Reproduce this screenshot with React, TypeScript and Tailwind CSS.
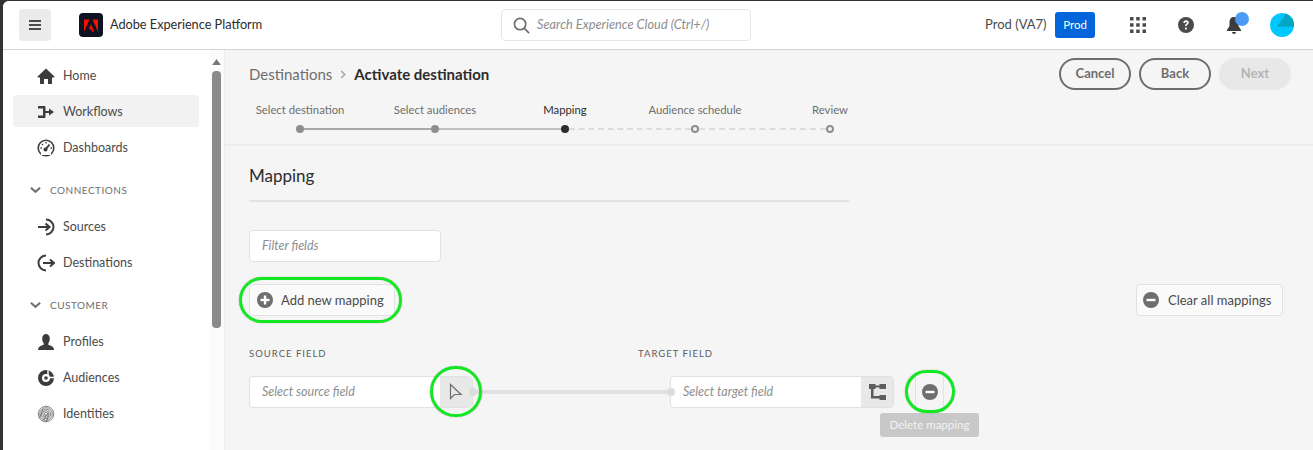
import React from "react";

const font = { fontFamily: '"Lato","Open Sans",sans-serif' };

function NavIcon({ name }: { name: string }) {
  const c = "w-[18px] h-[18px] text-[#3c3c3c]";
  switch (name) {
    case "home":
      return (
        <svg viewBox="0 0 18 18" className={c} fill="currentColor">
          <path d="M9 1.500 0.600 9.600c-.3.400 0 .9.400.9H3V16.500c0 .3.200.5.500.5H7v-5h4v5h3.500c.3 0 .5-.2.500-.5V10.500h2c.5 0 .7-.5.400-.9L9 1.500z" />
        </svg>
      );
    case "workflows":
      return (
        <svg viewBox="0 0 18 18" className={c} fill="currentColor">
          <path d="M1 3h6.500c.5 0 1 .5 1 1v4H12V5.500L17 9l-5 3.500V10H8.500v4c0 .5-.5 1-1 1H1v-2.500h5V5.500H1z" />
        </svg>
      );
    case "dash":
      return (
        <svg viewBox="0 0 18 18" className={c} fill="none" stroke="currentColor" strokeWidth="1.600">
          <circle cx="9" cy="9" r="7.800" />
          <path d="M4 14.500h10" stroke="#fff" strokeWidth="3" />
          <path d="M8.500 10.500 12.500 5.500" strokeWidth="2" />
          <path d="M3.500 9h1.500M5 5l1 1M9 3v1.500M13.500 9H15" strokeWidth="1.300" />
          <circle cx="8.500" cy="10.500" r="1.300" fill="currentColor" />
        </svg>
      );
    case "sources":
      return (
        <svg viewBox="0 0 18 18" className={c} fill="none" stroke="currentColor" strokeWidth="2">
          <path d="M9 1.500a7.500 7.500 0 1 1 0 15" />
          <path d="M1 9h11" />
          <path d="M8.500 5.500 12.500 9l-4 3.500" />
        </svg>
      );
    case "dest":
      return (
        <svg viewBox="0 0 18 18" className={c} fill="none" stroke="currentColor" strokeWidth="2">
          <path d="M9 1.500a7.500 7.500 0 1 0 0 15" />
          <path d="M6 9h11" />
          <path d="M13 5.500 17 9l-4 3.500" />
        </svg>
      );
    case "profile":
      return (
        <svg viewBox="0 0 18 18" className={c} fill="currentColor">
          <path d="M1 17c0-3 2-4 5-5 .8-.3 1-1 .7-1.600C5.800 9 5.200 7.500 5.200 5.500 5.200 2.500 7 1 9 1s3.800 1.500 3.800 4.500c0 2-.6 3.500-1.500 4.900-.3.600-.1 1.300.7 1.600 3 1 5 2 5 5z" />
        </svg>
      );
    case "aud":
      return (
        <svg viewBox="0 0 18 18" className={c} fill="none">
          <circle cx="9" cy="9" r="6" stroke="currentColor" strokeWidth="4" />
          <path d="M11 0v6M12 8.500h6" stroke="#fff" strokeWidth="1.400" />
          <circle cx="9" cy="9" r="1.800" fill="currentColor" />
        </svg>
      );
    default:
      return (
        <svg viewBox="0 0 18 18" className={c} fill="none" stroke="#666" strokeWidth="0.800">
          <circle cx="9" cy="9" r="7.800" />
          <circle cx="9" cy="9" r="6.300" />
          <circle cx="9" cy="9" r="4.800" />
          <circle cx="9" cy="9" r="3.300" />
          <circle cx="9" cy="9" r="1.800" />
          <path d="M9 9c0 2.500-1.500 5-3.500 7M11 8c.5 3.500-.5 6.500-2 9M2.500 13l3.500-9" />
        </svg>
      );
  }
}

function NavItem({ icon, label, active }: { icon: string; label: string; active?: boolean }) {
  return (
    <div className={`h-8 ml-[10px] mr-[11px] pt-[2px] rounded-[4px] flex items-center pl-[24px] gap-[8px] text-[12.500px] text-[#4b4b4b] ${active ? "bg-[#f2f2f2]" : ""}`}>
      <NavIcon name={icon} />
      <span>{label}</span>
    </div>
  );
}

function Section({ label }: { label: string }) {
  return (
    <div className="h-8 flex items-center pl-[27px] gap-[9px] text-[10px] tracking-[0.500px] text-[#6e6e6e] mt-[11px] mb-[4px]">
      <svg viewBox="0 0 12 8" className="w-[11px] h-[8px]" fill="none" stroke="#707070" strokeWidth="2.200">
        <path d="M1 1.500 6 6l5-4.500" />
      </svg>
      <span>{label}</span>
    </div>
  );
}

function Circle({ kind }: { kind: "plus" | "minus" }) {
  return (
    <svg viewBox="0 0 16 16" className="w-4 h-4">
      <circle cx="8" cy="8" r="8" fill="#6e6e6e" />
      <path d="M3.500 6.800h9v2.400h-9z" fill="#fff" />
      {kind === "plus" && <path d="M6.800 3.500h2.400v9H6.800z" fill="#fff" />}
    </svg>
  );
}

function Step({ label, active, className }: { label: string; active?: boolean; className: string }) {
  return (
    <div className={`text-center text-[11.300px] ${active ? "text-[#2c2c2c]" : "text-[#6e6e6e]"} ${className}`}>{label}</div>
  );
}

const Ring = () => <div className="w-[8px] h-[8px] rounded-full border-2 border-[#8e8e8e] bg-[#f5f5f5] shrink-0" />;
const Dot = ({ dark }: { dark?: boolean }) => (
  <div className={`w-[8px] h-[8px] rounded-full shrink-0 ${dark ? "bg-[#2c2c2c]" : "bg-[#8e8e8e]"}`} />
);
const Dash = ({ w }: { w: string }) => <div className={`h-0 border-t-2 border-dashed border-[#dcdcdc] ${w}`} />;

function Pill({ label, disabled }: { label: string; disabled?: boolean }) {
  return (
    <div
      className={`h-8 w-[72px] rounded-full flex items-center justify-center text-[13px] font-bold ${
        disabled ? "bg-[#e8e8e8] text-[#b4b4b4]" : "border-2 border-[#6e6e6e] text-[#6e6e6e]"
      }`}
    >
      {label}
    </div>
  );
}

const Ring2 = ({ className }: { className: string }) => (
  <div className={`absolute border-[3px] border-[#11e821] rounded-full shadow-[0_0_1px_#555] ${className}`} />
);

export default function App() {
  return (
    <div className="w-[1313px] h-[450px] overflow-hidden bg-[#333333] pl-[3px] pt-[1px]" style={font}>
      <div className="relative w-[1310px] h-[449px] bg-white rounded-tl-[6px] overflow-hidden flex flex-col">
        {/* header */}
        <header className="h-[49px] shrink-0 border-b border-[#d3d3d3] bg-white flex items-center">
          <div className="ml-[16px] w-8 h-8 rounded-[4px] bg-[#ebebeb] flex items-center justify-center">
            <svg viewBox="0 0 12 10" className="w-[12px] h-[10px]" fill="#4b4b4b">
              <path d="M0 0h12v2H0zM0 4h12v2H0zM0 8h12v2H0z" />
            </svg>
          </div>
          <div className="ml-[28px] w-[24px] h-[24px] rounded-[4px] bg-[#0d1320] flex items-center justify-center">
            <svg viewBox="0 0 16 14" className="w-[14px] h-[13px]" fill="#fa0f00">
              <path d="M6.300 0H0v14zM9.700 0H16v14zM8 5.200 11.600 14H9.200l-1-2.600H5.500z" />
            </svg>
          </div>
          <span className="ml-[7px] text-[12.700px] text-[#2c2c2c] w-[391px]">Adobe Experience Platform</span>
          <div className="w-[250px] h-8 border border-[#e6e6e6] rounded-[4px] flex items-center pl-[11px] gap-[7px]">
            <svg viewBox="0 0 18 18" className="w-[17px] h-[17px]" fill="none" stroke="#6e6e6e" strokeWidth="1.800">
              <circle cx="7.500" cy="7.500" r="6" />
              <path d="M12 12l5 5" />
            </svg>
            <span className="text-[12.800px] italic text-[#8e8e8e] whitespace-nowrap">Search Experience Cloud (Ctrl+/)</span>
          </div>
          <span className="ml-[234px] text-[13px] text-[#4b4b4b] w-[70px]">Prod (VA7)</span>
          <div className="w-[40px] h-[26px] rounded-[3px] bg-[#0265dc] text-white text-[11.500px] flex items-center justify-center">Prod</div>
          <svg viewBox="0 0 16 16" className="w-4 h-4 ml-[35px]" fill="#4b4b4b">
            <path d="M0 0h3.500v3.500H0zM6.200 0h3.500v3.500H6.200zM12.500 0H16v3.500h-3.500zM0 6.200h3.500v3.500H0zM6.200 6.200h3.500v3.500H6.200zM12.500 6.200H16v3.500h-3.500zM0 12.500h3.500V16H0zM6.200 12.500h3.500V16H6.200zM12.500 12.500H16V16h-3.500z" />
          </svg>
          <svg viewBox="0 0 16 16" className="w-4 h-4 ml-[32px]">
            <circle cx="8" cy="8" r="8" fill="#4b4b4b" />
            <path d="M5.300 6c0-1.600 1.200-2.700 2.800-2.700s2.700 1 2.700 2.300c0 1.100-.6 1.700-1.400 2.200-.6.400-.8.600-.8 1.300H7c0-1.200.4-1.800 1.200-2.300.6-.4.900-.6.900-1.100s-.4-.8-1-.8-1.100.4-1.100 1.100zM7 10.500h1.700v1.900H7z" fill="#fff" />
          </svg>
          <div className="relative ml-[32px] w-4 h-[18px]">
            <svg viewBox="0 0 16 18" className="w-4 h-[18px]" fill="#3c3c3c">
              <path d="M8 1c3 0 4.500 2 4.500 5v4l2.500 4v1H1v-1l2.500-4V6C3.500 3 5 1 8 1zM6 16h4c0 1-1 2-2 2s-2-1-2-2z" />
            </svg>
            <div className="absolute -top-[4px] left-[9px] w-[14px] h-[14px] rounded-full bg-[#4b9cf5]" />
          </div>
          <svg viewBox="0 0 24 24" className="w-6 h-6 ml-[28px]">
            <circle cx="12" cy="12" r="12" fill="#00c8ff" />
            <path d="M15.500 .5 7 13.700H23.900A12 12 0 0 0 15.500 .5z" fill="#00a6c4" />
          </svg>
        </header>

        <div className="flex-1 flex min-h-0">
          {/* sidebar */}
          <aside className="w-[207px] shrink-0 bg-white pt-[9px]">
            <NavItem icon="home" label="Home" />
            <div className="h-[4px]" />
            <NavItem icon="workflows" label="Workflows" active />
            <div className="h-[4px]" />
            <NavItem icon="dash" label="Dashboards" />
            <Section label="CONNECTIONS" />
            <NavItem icon="sources" label="Sources" />
            <div className="h-[4px]" />
            <NavItem icon="dest" label="Destinations" />
            <Section label="CUSTOMER" />
            <NavItem icon="profile" label="Profiles" />
            <div className="h-[4px]" />
            <NavItem icon="aud" label="Audiences" />
            <div className="h-[4px]" />
            <NavItem icon="id" label="Identities" />
          </aside>
          {/* scrollbar */}
          <div className="w-[15px] shrink-0 bg-[#fbfbfb] border-r border-[#ececec] flex flex-col items-center pr-[1px] pt-[9px]">
            <svg viewBox="0 0 10 7" className="w-[9px] h-[6px]">
              <path d="M5 0l5 7H0z" fill="#777" />
            </svg>
            <div className="mt-[6px] w-[9px] h-[257px] rounded-[4px] bg-[#8a8a8a]" />
          </div>
          {/* main */}
          <main className="relative flex-1 bg-[#f5f5f5] min-w-0">
            <div className="h-[96px] border-b-2 border-[#ececec] relative">
              <div className="flex items-center pl-[24px] pt-[12px] h-[36px]">
                <span className="text-[15px] text-[#6e6e6e]">Destinations</span>
                <svg viewBox="0 0 6 10" className="w-[6px] h-[9px] mx-[8px]" fill="none" stroke="#a0a0a0" strokeWidth="1.500">
                  <path d="M1 1l4 4-4 4" />
                </svg>
                <span className="text-[15px] font-bold text-[#2c2c2c]">Activate destination</span>
              </div>
              <div className="absolute right-[22px] top-[8px] flex gap-2">
                <Pill label="Cancel" />
                <Pill label="Back" />
                <Pill label="Next" disabled />
              </div>
              <div className="flex pl-[10px] mt-[15px] h-[18px] items-center">
                <Step label="Select destination" className="w-[130px]" />
                <Step label="Select audiences" className="w-[130px] ml-[5px]" />
                <Step label="Mapping" active className="w-[130px]" />
                <Step label="Audience schedule" className="w-[130px]" />
                <Step label="Review" className="w-[130px] ml-[5px]" />
              </div>
              <div className="flex items-center pl-[71px] mt-[6px] h-[8px]">
                <Dot />
                <div className="h-[2px] w-[127px] bg-[#a8a8a8]" />
                <Dot />
                <div className="h-[2px] w-[122px] bg-[#bfbfbf]" />
                <Dot dark />
                <Dash w="w-[122px]" />
                <Ring />
                <Dash w="w-[127px]" />
                <Ring />
              </div>
            </div>

            <div className="pl-[24px]">
              <h2 className="mt-[18px] h-[23px] text-[17px] text-[#2c2c2c] leading-[23px]">Mapping</h2>
              <div className="mt-[13px] w-[600px] h-[2px] bg-[#e3e3e3]" />
              <div className="mt-[28px] w-[192px] h-8 bg-white border border-[#e1e1e1] rounded-[4px] flex items-center pl-[12px] text-[12.500px] italic text-[#8e8e8e]">
                Filter fields
              </div>
              <div className="mt-[22px] mr-[30px] flex justify-between">
                <div className="h-8 w-[146px] rounded-[4px] border border-[#e1e1e1] bg-[#fafafa] flex items-center pl-[7px] gap-[8px] text-[13px] text-[#4b4b4b]">
                  <Circle kind="plus" />
                  <span className="mt-[1px]">Add new mapping</span>
                </div>
                <div className="h-8 w-[147px] rounded-[4px] border border-[#e1e1e1] bg-[#fafafa] flex items-center pl-[6px] gap-[9px] text-[13px] text-[#4b4b4b]">
                  <Circle kind="minus" />
                  <span className="mt-[1px]">Clear all mappings</span>
                </div>
              </div>
              <div className="mt-[31px] flex text-[9.500px] tracking-[1px] text-[#5c5c5c] h-[14px] items-center">
                <span className="w-[389px]">SOURCE FIELD</span>
                <span>TARGET FIELD</span>
              </div>
              <div className="mt-[15px] flex items-center">
                <div className="w-[224px] h-8 bg-white border border-[#e1e1e1] rounded-[4px] flex items-center justify-between pl-[12px] text-[12.500px] italic text-[#8e8e8e] overflow-hidden">
                  <span>Select source field</span>
                  <div className="w-[32px] h-full bg-[#e8e8e8] flex items-center justify-center">
                    <svg viewBox="0 0 14 18" className="w-[14px] h-[18px]" fill="none" stroke="#6e6e6e" strokeWidth="1.200">
                      <path d="M1.500 1.500v14l4-4h6.500z" />
                    </svg>
                  </div>
                </div>
                <div className="w-[8px] h-[8px] rounded-full bg-[#dcdcdc] -ml-[4px]" />
                <div className="w-[190px] h-[4px] bg-[#e1e1e1]" />
                <div className="relative w-[8px] h-[8px] rounded-full bg-[#dcdcdc]" />
                <div className="w-[224px] h-8 -ml-[5px] bg-white border border-[#e1e1e1] rounded-[4px] flex items-center justify-between pl-[12px] text-[12.500px] italic text-[#8e8e8e] overflow-hidden">
                  <span>Select target field</span>
                  <div className="w-[32px] h-full bg-[#e8e8e8] flex items-center justify-center">
                    <svg viewBox="0 0 17 16" className="w-[17px] h-4" fill="#5c5c5c">
                      <path d="M0 0h6.500v5H0zM10.500 0H17v5h-6.500zM10.500 11H17v5h-6.500zM2 5h2.500v7h6v2.500H2zM6.500 1.500h4v2h-4z" />
                    </svg>
                  </div>
                </div>
                <div className="ml-[21px] w-[29px] h-8 border-x border-[#e1e1e1] flex items-center justify-center">
                  <Circle kind="minus" />
                </div>
              </div>
            </div>

            {/* tooltip */}
            <div className="absolute left-[655px] top-[363px] w-[99px] h-6 rounded-[3px] bg-[#c8c8c8] text-[#f2f2f2] text-[11.500px] flex items-center justify-center">
              Delete mapping
            </div>
            {/* annotations */}
            <Ring2 className="left-[14px] top-[227px] w-[163px] h-[46px]" />
            <Ring2 className="left-[205px] top-[316px] w-[52px] h-[51px]" />
            <Ring2 className="left-[680px] top-[320px] w-[50px] h-[43px]" />
          </main>
        </div>
      </div>
    </div>
  );
}
